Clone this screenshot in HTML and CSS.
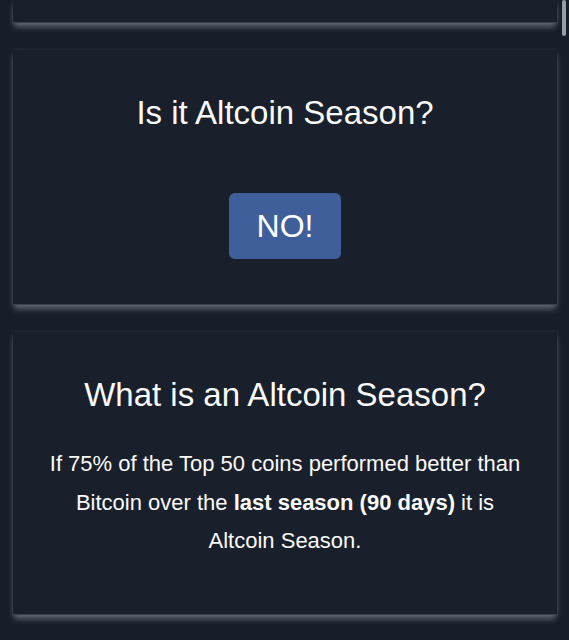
FILE: index.html
```html
<!DOCTYPE html>
<html lang="en">
<head>
    <meta charset="UTF-8">
    <meta name="viewport" content="width=device-width, initial-scale=1.0">
    <title>Altcoin Season</title>
    <link rel="stylesheet" href="styles.css">
</head>
<body>
    <div class="page">
        <div class="card card-partial"></div>
        <div class="card">
            <h2>Is it Altcoin Season?</h2>
            <button class="answer">NO!</button>
        </div>
        <div class="card card-info">
            <h2>What is an Altcoin Season?</h2>
            <p>If 75% of the Top 50 coins performed better than Bitcoin over the <strong>last season (90 days)</strong> it is Altcoin Season.</p>
        </div>
    </div>
    <div class="scrollbar"></div>
</body>
</html>
```

FILE: styles.css
```css
html, body {
    margin: 0;
    height: 100%;
    overflow: hidden;
}
body {
    font-family: "Liberation Sans", Arial, sans-serif;
    background-color: #181e29;
    color: #fafafa;
    position: relative;
}
.page {
    display: flex;
    flex-direction: column;
    gap: 27px;
    padding: 0 12px 0 13px;
}
.card {
    background-color: #19202b;
    padding: 44px 20px 45px;
    text-align: center;
    box-shadow: 0 5px 6px -1px rgba(200, 208, 222, 0.38), 0 0 4px rgba(200, 208, 222, 0.14); /* glow under the card */
    border-bottom: 1px solid #3a414d;
}
.card-partial {
    height: 22px;
    padding: 0;
}
.card h2 {
    margin: 0;
    font-size: 33px;
    font-weight: normal;
    line-height: 38px;
}
.answer {
    display: block;
    height: 66px;
    margin: 61px auto 0;
    padding: 0 28px;
    font-family: inherit;
    font-size: 32px;
    line-height: 66px;
    color: #fff;
    background-color: #3e5f9a;
    border: none;
    border-radius: 6px;
}
.card-info {
    padding-bottom: 43px;
}
.card-info p {
    max-width: 480px;
    margin: 31px auto 10px;
    font-size: 22px;
    line-height: 38.5px;
}
.scrollbar {
    position: absolute;
    top: 0;
    right: 3px;
    width: 4px;
    height: 36px;
    border-radius: 2px;
    background-color: #9a9ca3;
}
```
